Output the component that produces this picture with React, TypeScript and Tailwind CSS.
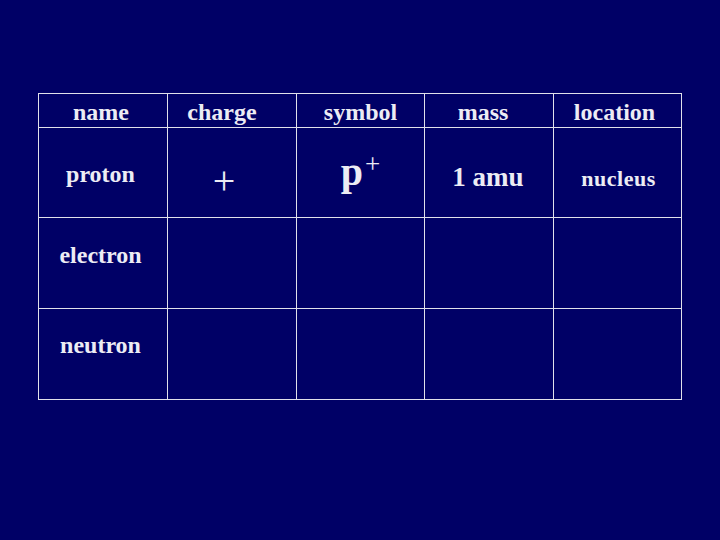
import React from "react";

const serif = { fontFamily: '"Liberation Serif", "Times New Roman", serif' };

function Cell({ children, className = "" }: { children?: React.ReactNode; className?: string }) {
  return (
    <div className={`border-r border-b border-[#e0e0ea] flex items-center justify-center ${className}`}>
      {children}
    </div>
  );
}

export default function App() {
  return (
    <div className="w-[720px] h-[540px] bg-[#000066] pt-[93px] pl-[38px] text-[#ececf4] font-bold" style={serif}>
      <div className="grid grid-cols-[129px_129px_128px_129px_128px] grid-rows-[34px_90px_91px_91px] w-fit border-l border-t border-[#e0e0ea]">
        <Cell className="text-[24px] leading-none pt-[3px] pr-[4px]">name</Cell>
        <Cell className="text-[24px] leading-none pt-[3px] pr-[20px]">charge</Cell>
        <Cell className="text-[24px] leading-none pt-[3px]">symbol</Cell>
        <Cell className="text-[24px] leading-none pt-[3px] pr-[12px]">mass</Cell>
        <Cell className="text-[24px] leading-none pt-[3px] pr-[6px]">location</Cell>

        <Cell className="text-[24px] leading-none pt-[3px] pr-[5px]">proton</Cell>
        <Cell className="text-[40px] leading-none font-normal pr-[16px] pt-[16px]">+</Cell>
        <Cell className="pb-[2px]">
          <span className="text-[40px] leading-none">p</span>
          <span className="text-[27px] leading-none font-normal self-start mt-[23px] ml-[2px]">+</span>
        </Cell>
        <Cell className="text-[27px] leading-none pt-[9px] pr-[2px]">1 amu</Cell>
        <Cell className="text-[22px] leading-none tracking-[0.5px] pt-[12px] pl-[2px]">nucleus</Cell>

        <Cell className="text-[24px] leading-none pb-[17px] pr-[5px]">electron</Cell>
        <Cell />
        <Cell />
        <Cell />
        <Cell />

        <Cell className="text-[24px] leading-none pb-[19px] pr-[5px]">neutron</Cell>
        <Cell />
        <Cell />
        <Cell />
        <Cell />
      </div>
    </div>
  );
}
